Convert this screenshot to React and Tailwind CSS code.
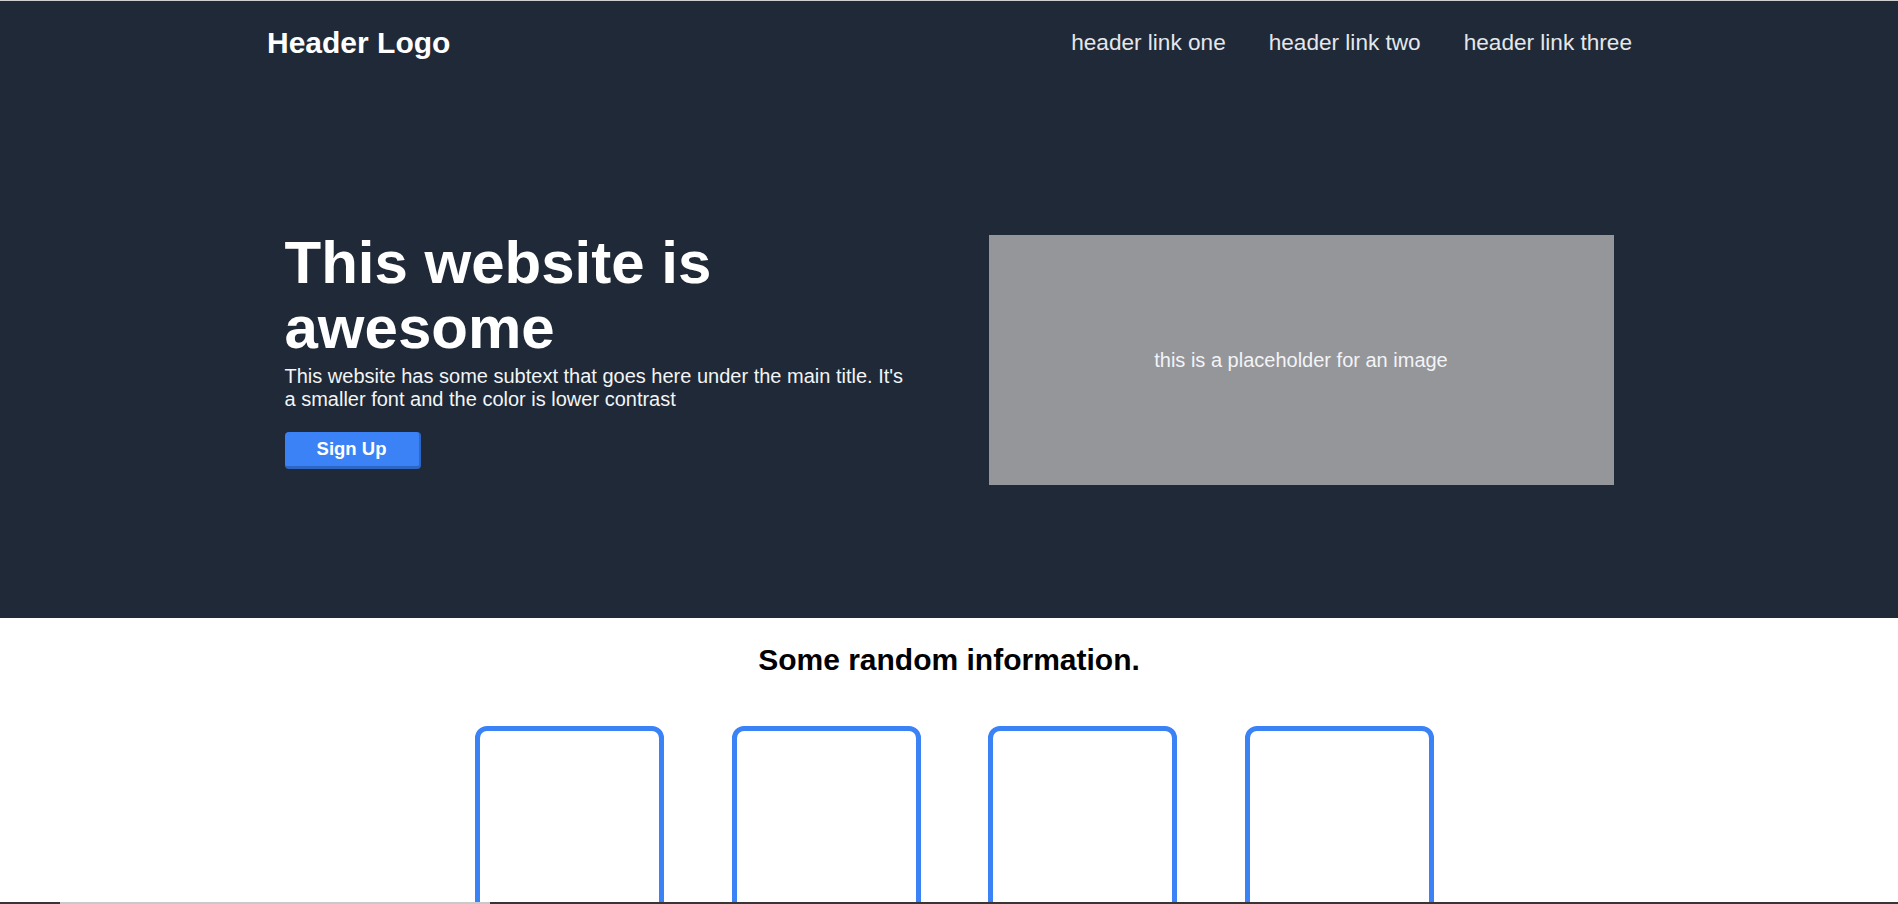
import React from 'react';

const links = ['header link one', 'header link two', 'header link three'];

function Header() {
  return (
    <header className="border-t border-[#cfcfcf] bg-[#1f2937]">
      <div className="mx-auto flex w-[1366px] items-center justify-between py-6">
        <h1 className="pl-px text-3xl font-bold text-white">Header Logo</h1>
        <nav className="flex items-center gap-[43px]">
          {links.map((l) => (
            <a key={l} href="#" className="text-[22.6px] text-gray-200">
              {l}
            </a>
          ))}
        </nav>
      </div>
    </header>
  );
}

function Hero() {
  return (
    <section className="bg-[#1f2937] pt-[145px] pb-[133px]">
      <div className="mx-auto flex w-[1329px] items-start gap-[79px]">
        <div className="w-[625px]">
          <h2 className="text-[60px] font-bold leading-[65px] text-white">
            This website is awesome
          </h2>
          <p className="mt-[5px] text-xl leading-[23px] text-gray-100">
            This website has some subtext that goes here under the main title. It's a smaller font and the color is lower contrast
          </p>
          <button className="mt-[21px] flex h-[37px] w-[136px] items-center justify-center rounded border-r-2 border-b-[3px] border-[#2d66c4] bg-[#3b82f6] text-[18.5px] font-bold text-white">
            Sign Up
          </button>
        </div>
        <div className="mt-[5px] flex h-[250px] w-[625px] items-center justify-center bg-[#95969a]">
          <span className="text-xl text-gray-100">this is a placeholder for an image</span>
        </div>
      </div>
    </section>
  );
}

function Info() {
  return (
    <section className="bg-white pt-6">
      <h2 className="text-center text-3xl font-bold text-black">Some random information.</h2>
      <div className="mt-12 flex justify-center gap-[67.5px] pl-[11px]">
        {[0, 1, 2, 3].map((i) => (
          <div key={i} className="h-[260px] w-[189px] rounded-xl border-[5px] border-[#3b82f6]" />
        ))}
      </div>
    </section>
  );
}

export default function App() {
  return (
    <div
      className="relative h-screen overflow-hidden bg-white"
      style={{ fontFamily: '"Liberation Sans", Arial, sans-serif' }}
    >
      <Header />
      <Hero />
      <Info />
      {/* thin strip along the bottom edge */}
      <div className="fixed bottom-0 left-0 right-0 flex h-[2px] bg-[#3a3535]">
        <div className="ml-[60px] w-[430px] bg-[#c9c9c9]" />
      </div>
    </div>
  );
}
